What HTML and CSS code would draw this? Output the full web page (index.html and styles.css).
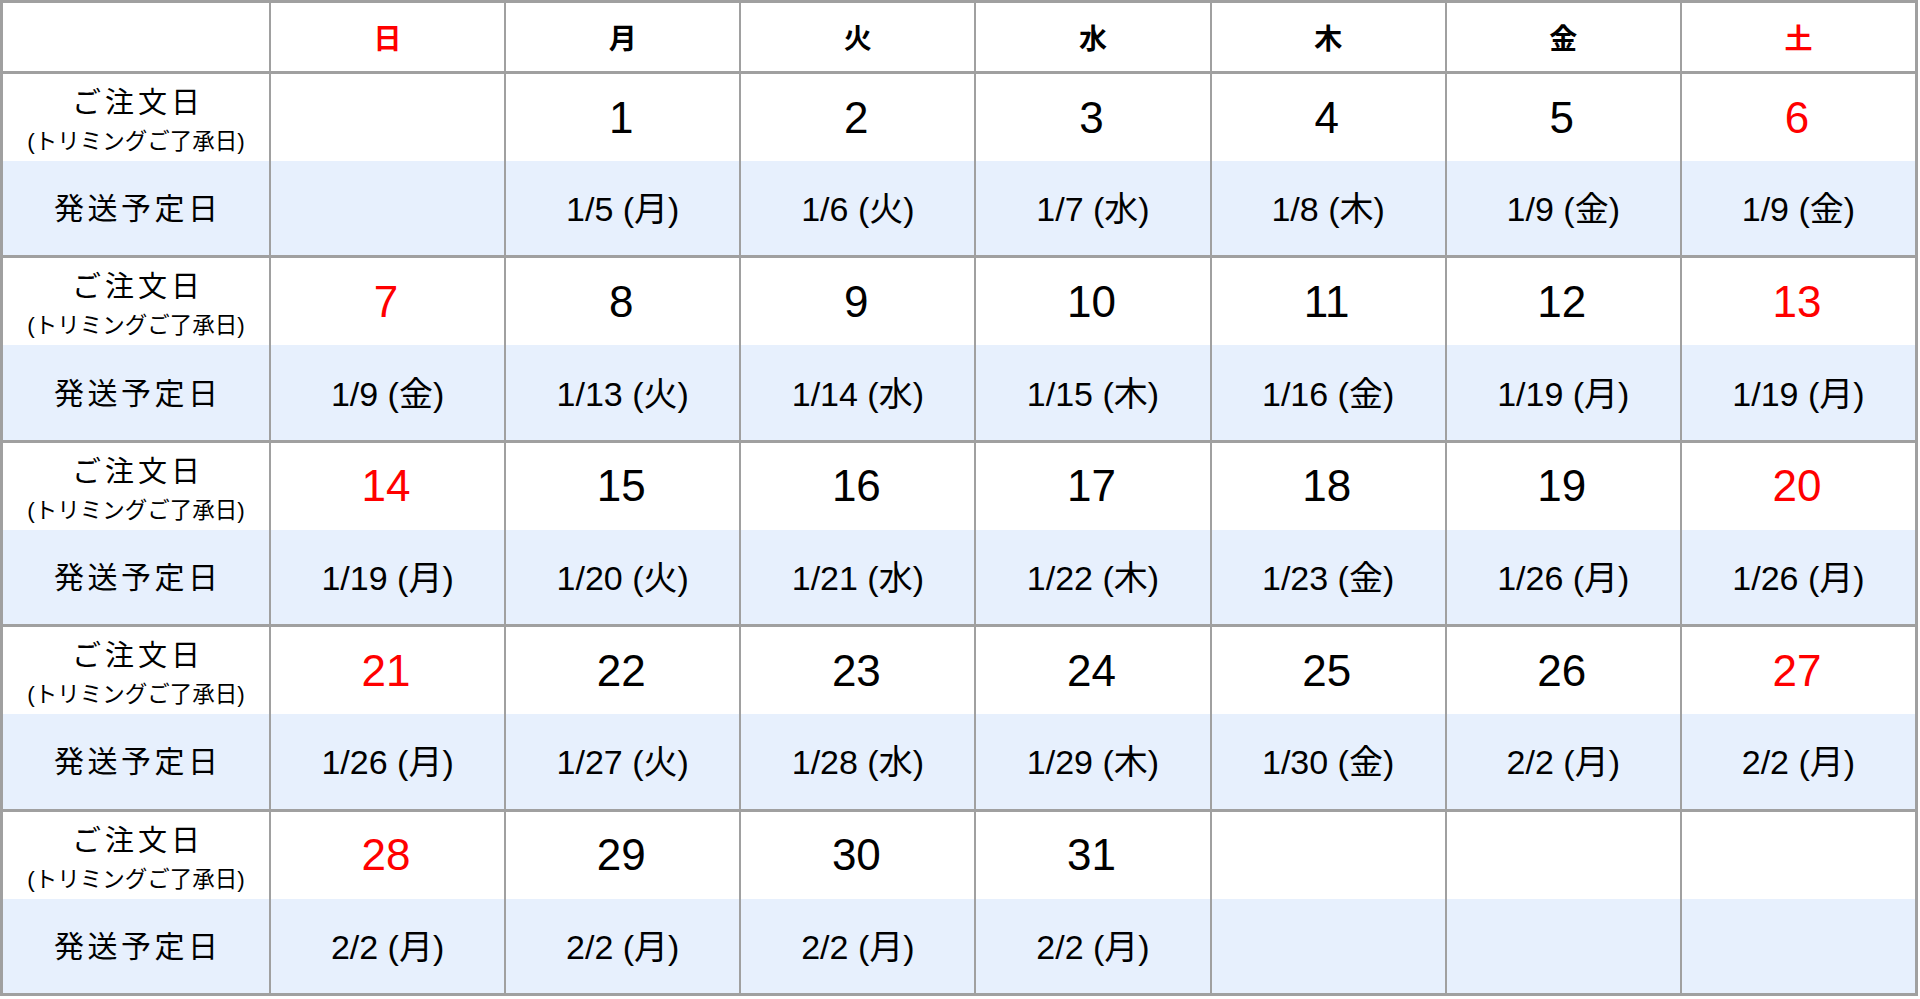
FILE: index.html
```html
<!DOCTYPE html>
<html lang="ja">
<head>
<meta charset="utf-8">
<title>発送予定カレンダー</title>
<link rel="stylesheet" href="styles.css">
</head>
<body>
<div class="cal">
  <div class="head">
    <div class="hc"></div>
    <div class="hc red">日</div>
    <div class="hc">月</div>
    <div class="hc">火</div>
    <div class="hc">水</div>
    <div class="hc">木</div>
    <div class="hc">金</div>
    <div class="hc red">土</div>
  </div>

  <div class="week">
    <div class="label"><span class="l1">ご注文日</span><span class="l2">(トリミングご了承日)</span></div>
    <div class="day"></div>
    <div class="day">1</div>
    <div class="day">2</div>
    <div class="day">3</div>
    <div class="day">4</div>
    <div class="day">5</div>
    <div class="day red">6</div>
    <div class="ship label-ship">発送予定日</div>
    <div class="ship"></div>
    <div class="ship">1/5 (月)</div>
    <div class="ship">1/6 (火)</div>
    <div class="ship">1/7 (水)</div>
    <div class="ship">1/8 (木)</div>
    <div class="ship">1/9 (金)</div>
    <div class="ship">1/9 (金)</div>
  </div>

  <div class="week">
    <div class="label"><span class="l1">ご注文日</span><span class="l2">(トリミングご了承日)</span></div>
    <div class="day red">7</div>
    <div class="day">8</div>
    <div class="day">9</div>
    <div class="day">10</div>
    <div class="day">11</div>
    <div class="day">12</div>
    <div class="day red">13</div>
    <div class="ship label-ship">発送予定日</div>
    <div class="ship">1/9 (金)</div>
    <div class="ship">1/13 (火)</div>
    <div class="ship">1/14 (水)</div>
    <div class="ship">1/15 (木)</div>
    <div class="ship">1/16 (金)</div>
    <div class="ship">1/19 (月)</div>
    <div class="ship">1/19 (月)</div>
  </div>

  <div class="week">
    <div class="label"><span class="l1">ご注文日</span><span class="l2">(トリミングご了承日)</span></div>
    <div class="day red">14</div>
    <div class="day">15</div>
    <div class="day">16</div>
    <div class="day">17</div>
    <div class="day">18</div>
    <div class="day">19</div>
    <div class="day red">20</div>
    <div class="ship label-ship">発送予定日</div>
    <div class="ship">1/19 (月)</div>
    <div class="ship">1/20 (火)</div>
    <div class="ship">1/21 (水)</div>
    <div class="ship">1/22 (木)</div>
    <div class="ship">1/23 (金)</div>
    <div class="ship">1/26 (月)</div>
    <div class="ship">1/26 (月)</div>
  </div>

  <div class="week">
    <div class="label"><span class="l1">ご注文日</span><span class="l2">(トリミングご了承日)</span></div>
    <div class="day red">21</div>
    <div class="day">22</div>
    <div class="day">23</div>
    <div class="day">24</div>
    <div class="day">25</div>
    <div class="day">26</div>
    <div class="day red">27</div>
    <div class="ship label-ship">発送予定日</div>
    <div class="ship">1/26 (月)</div>
    <div class="ship">1/27 (火)</div>
    <div class="ship">1/28 (水)</div>
    <div class="ship">1/29 (木)</div>
    <div class="ship">1/30 (金)</div>
    <div class="ship">2/2 (月)</div>
    <div class="ship">2/2 (月)</div>
  </div>

  <div class="week">
    <div class="label"><span class="l1">ご注文日</span><span class="l2">(トリミングご了承日)</span></div>
    <div class="day red">28</div>
    <div class="day">29</div>
    <div class="day">30</div>
    <div class="day">31</div>
    <div class="day"></div>
    <div class="day"></div>
    <div class="day"></div>
    <div class="ship label-ship">発送予定日</div>
    <div class="ship">2/2 (月)</div>
    <div class="ship">2/2 (月)</div>
    <div class="ship">2/2 (月)</div>
    <div class="ship">2/2 (月)</div>
    <div class="ship"></div>
    <div class="ship"></div>
    <div class="ship"></div>
  </div>
</div>
</body>
</html>
```

FILE: styles.css
```css
html, body {
  margin: 0;
  padding: 0;
  background: #ffffff;
}

body {
  font-family: "Liberation Sans", "Noto Sans CJK JP", sans-serif;
  color: #000000;
}

.cal {
  box-sizing: border-box;
  width: 1918px;
  height: 996px;
  border: 3px solid #a0a0a0;
  background: #a0a0a0;
  display: flex;
  flex-direction: column;
  gap: 3px;
}

.head {
  display: grid;
  grid-template-columns: 266px repeat(7, 1fr);
  column-gap: 2px;
  height: 68px;
  flex: none;
}

.week {
  display: grid;
  grid-template-columns: 266px repeat(7, 1fr);
  grid-template-rows: 87px 1fr;
  column-gap: 2px;
  flex: 1 1 0;
  min-height: 0;
}

.hc,
.day,
.label,
.ship {
  display: flex;
  align-items: center;
  justify-content: center;
  background: #ffffff;
  min-width: 0;
}

.hc {
  font-family: "Noto Sans CJK JP", sans-serif;
  font-weight: 700;
  font-size: 28px;
  line-height: 1;
}

.day {
  font-size: 44px;
  line-height: 1;
  padding-right: 3px;
}

.red {
  color: #ff0000;
}

.label {
  flex-direction: column;
  padding-top: 7px;
  box-sizing: border-box;
}

.l1 {
  display: block;
  font-size: 29px;
  line-height: 42px;
  letter-spacing: 4px;
  text-indent: 4px;
}

.l2 {
  display: block;
  font-size: 22.5px;
  line-height: 36px;
}

.ship {
  background: #e7f0fd;
  font-size: 34px;
  line-height: 1;
  padding-top: 2px;
  box-sizing: border-box;
}

.label-ship {
  font-size: 30px;
  letter-spacing: 3.5px;
  text-indent: 3.5px;
}
```
